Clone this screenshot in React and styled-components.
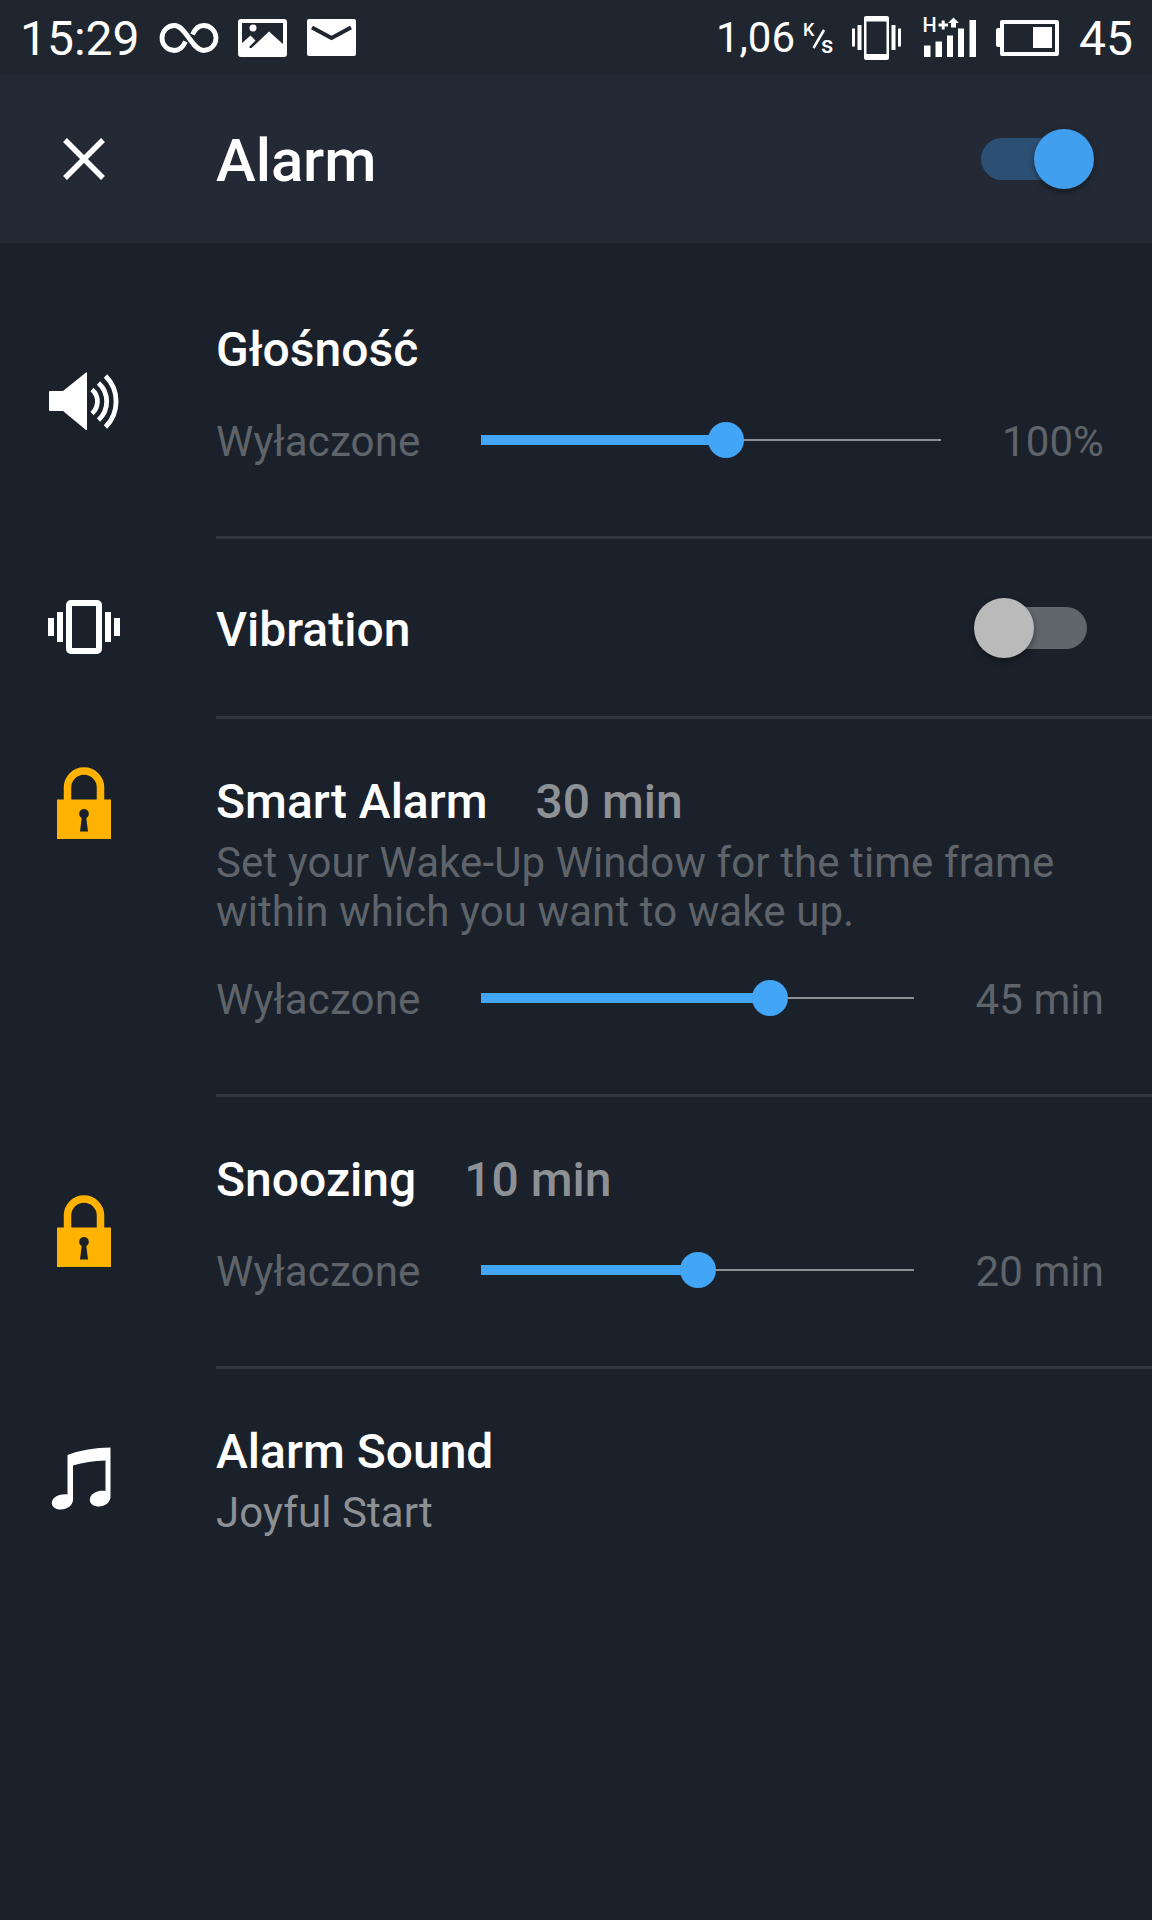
import styled, { createGlobalStyle } from 'styled-components';

const GlobalStyle = createGlobalStyle`
  * {
    box-sizing: border-box;
  }
  body {
    margin: 0;
    background-color: #1b212b;
    font-family: Roboto, 'Noto Sans', sans-serif;
  }
  svg {
    display: block;
    flex: none;
    overflow: visible;
  }
`;

const Screen = styled.div`
  width: 1152px;
  height: 1920px;
  overflow: hidden;
  background-color: #1b212b;
  color: #fff;
`;

const StatusBar = styled.div`
  display: flex;
  justify-content: space-between;
  height: 75px;
  padding: 0 19px 0 20px;
  background-color: #1f2630;
`;

const StatusGroup = styled.div`
  display: flex;
  align-items: center;
  gap: 20px;
`;

const StatusText = styled.span`
  font-size: ${(props) => props.$size}px;
  line-height: 56px;
  padding-top: ${(props) => props.$drop || 0}px;
  white-space: nowrap;
`;

const Speed = styled.div`
  display: flex;
  align-items: center;
  gap: 9px;
  margin-right: -1px;
`;

const Header = styled.header`
  display: flex;
  align-items: center;
  height: 168px;
  padding: 0 58px 0 63px;
  background-color: #232a36;
`;

const Title = styled.h1`
  flex: 1;
  margin: 4px 0 0 111px;
  font-size: 60px;
  font-weight: 500;
  line-height: 70px;
  letter-spacing: -0.1px;
`;

const Section = styled.section`
  display: flex;
  padding-left: 48px;
  padding-top: ${(props) => props.$top || 0}px;
`;

const IconSlot = styled.div`
  display: flex;
  align-items: center;
  justify-content: center;
  flex: none;
  width: 72px;
  height: 72px;
  margin: ${(props) => props.$top}px 96px 0 0;
`;

const Content = styled.div`
  flex: 1;
  padding: 55px 48px 70px 0;
  border-bottom: ${(props) => (props.$last ? 'none' : '3px solid #303640')};
`;

const SwitchContent = styled(Content)`
  display: flex;
  justify-content: space-between;
  height: 180px;
  padding: 63px 58px 0 0;
`;

const Heading = styled.div`
  display: flex;
  gap: 48px;
`;

const Name = styled.h2`
  margin: 0;
  font-size: 48px;
  font-weight: 500;
  line-height: 56px;
  color: ${(props) => (props.$muted ? '#8d9095' : '#fff')};
`;

const Text = styled.p`
  margin: 8px 0 0;
  font-size: 42px;
  line-height: 49px;
  letter-spacing: 0.09px;
  color: ${(props) => (props.$bright ? '#8d9095' : '#5f636a')};
`;

const SliderRow = styled.div`
  display: flex;
  margin-top: 39px;
  font-size: 42px;
  line-height: 49px;
  letter-spacing: 0.12px;
  color: #5f636a;
`;

const Label = styled.span`
  white-space: nowrap;
`;

const Track = styled.div`
  display: flex;
  align-items: center;
  flex: 1;
  height: 46px;
  margin: 0 61px;
`;

const Fill = styled.div`
  height: 10px;
  background-color: #42a5f5;
`;

const Knob = styled.div`
  flex: none;
  width: 36px;
  height: 36px;
  margin: 0 -18px;
  border-radius: 50%;
  background-color: #42a5f5;
  z-index: 1;
`;

const Rest = styled.div`
  flex: 1;
  height: 2px;
  background-color: #8d9095;
`;

const SwitchBody = styled.div`
  display: flex;
  align-items: center;
  justify-content: ${(props) => (props.$on ? 'flex-end' : 'flex-start')};
  width: 106px;
  height: 42px;
  margin: ${(props) => (props.$on ? '0' : '5px')} 7px 0;
  border-radius: 21px;
  background-color: ${(props) => (props.$on ? '#2c5074' : '#61656c')};
`;

const SwitchThumb = styled.div`
  flex: none;
  width: 60px;
  height: 60px;
  margin: -1px -7px 0;
  border-radius: 50%;
  background-color: ${(props) => (props.$on ? '#409fee' : '#bababa')};
  box-shadow: 0 3px 6px rgba(0, 0, 0, 0.4);
`;

function Switch({ on }) {
  return (
    <SwitchBody $on={on}>
      <SwitchThumb $on={on} />
    </SwitchBody>
  );
}

function Slider({ max, value }) {
  return (
    <SliderRow>
      <Label>Wyłaczone</Label>
      <Track>
        <Fill style={{ width: `${value}%` }} />
        <Knob />
        <Rest />
      </Track>
      <Label>{max}</Label>
    </SliderRow>
  );
}

function InfinityIcon() {
  return (
    <svg width="58" height="32" viewBox="0 0 58 32" fill="none" stroke="#fff" strokeWidth="4.800">
      <path d="M25.500 19.500C23 25 19.500 28.500 14.500 28.500a12.500 12.500 0 0 1 0-25C26 3.500 32 28.500 43.500 28.500a12.500 12.500 0 0 0 0-25C38.500 3.500 35 7 32.500 12.500" />
    </svg>
  );
}

function PictureIcon() {
  return (
    <svg width="49" height="38" viewBox="0 0 49 38">
      <rect x="2" y="2" width="45" height="34" rx="1" fill="none" stroke="#fff" strokeWidth="4" />
      <circle cx="15" cy="9" r="3.500" fill="#fff" />
      <path d="M3 25 12.500 16.500l5 5-6 6V29h2L31 12.500 46 26v10H3z" fill="#fff" />
    </svg>
  );
}

function MailIcon() {
  return (
    <svg width="49" height="38" viewBox="0 0 49 38">
      <rect width="49" height="37" rx="2" fill="#fff" />
      <path d="M5 8.500 24.500 19 44 8.500" fill="none" stroke="#1f2630" strokeWidth="4" />
    </svg>
  );
}

function SpeedUnit() {
  return (
    <svg width="29" height="34" viewBox="0 0 29 34" fill="#fff">
      <text x="-1" y="15" fontSize="18" fontWeight="500">K</text>
      <path d="M9.500 27 20 9" stroke="#fff" strokeWidth="2.500" />
      <text x="17" y="32" fontSize="24" fontWeight="500">s</text>
    </svg>
  );
}

function RingerIcon() {
  return (
    <svg width="52" height="44" viewBox="0 0 52 44" fill="#fff">
      <path fillRule="evenodd" d="M14 0h21a2 2 0 0 1 2 2v40a2 2 0 0 1-2 2H14a2 2 0 0 1-2-2V2a2 2 0 0 1 2-2zM14.500 5.500v32.500h20V5.500z" />
      <path d="M0 12.500h3v18H0zM5.500 9H9.500v25H5.500zM39.500 9H43.500v25h-4zM46 12.500h3v18h-3z" />
    </svg>
  );
}

function SignalIcon() {
  return (
    <svg width="52" height="40" viewBox="0 0 52 40" fill="#fff">
      <path d="M0 27.500h6.500V39H0zM11.500 23.500H18V39h-6.500zM23 17.500h6V39h-6zM34 10.500h6V39h-6zM45.500 2H52v37h-6.500z" />
      <path d="M14.500 5.500h9.500V8.500h-9.500zM17.700 2.500h3v9h-3zM29.500-.500l5.500 5.500h-3v4.500h-5V5h-3z" />
      <text x="-1.500" y="14" fontSize="20" fontWeight="500">H</text>
    </svg>
  );
}

function BatteryIcon() {
  return (
    <svg width="63" height="36" viewBox="0 0 63 36" fill="#fff">
      <path fillRule="evenodd" d="M6 0h55a2 2 0 0 1 2 2v32a2 2 0 0 1-2 2H6a2 2 0 0 1-2-2v-7H2a2 2 0 0 1-2-2V10a2 2 0 0 1 2-2h2V2a2 2 0 0 1 2-2zM8 4v28h51V4z" />
      <path d="M37 7h19v21H37z" />
    </svg>
  );
}

function CloseIcon() {
  return (
    <svg width="42" height="42" viewBox="0 0 42 42" stroke="#fff" strokeWidth="5.500">
      <path d="M2 2 40 40M40 2 2 40" />
    </svg>
  );
}

function VolumeIcon() {
  return (
    <svg width="72" height="72" viewBox="0 0 72 72">
      <path d="M2 26h13L38 7.500h1V65h-1L15 46H2q-1 0-1-1V27q0-1 1-1z" fill="#fff" />
      <g fill="none" stroke="#fff" strokeWidth="4.800">
        <path d="M44 24.500a16 16 0 0 1 0 24M50.500 18a25 25 0 0 1 0 37M57.500 11a36 36 0 0 1 0 51" />
      </g>
    </svg>
  );
}

function VibrationIcon() {
  return (
    <svg width="72" height="72" viewBox="0 0 72 72" fill="#fff">
      <rect x="21" y="12" width="30" height="48" rx="2" fill="none" stroke="#fff" strokeWidth="6" />
      <path d="M0 27h6v18H0zM9 21h6v30H9zM57 21h6v30h-6zM66 27h6v18h-6z" />
    </svg>
  );
}

function LockIcon() {
  return (
    <svg width="54" height="72" viewBox="0 0 54 72">
      <path d="M10.500 34V20.500a16.500 16.500 0 0 1 33 0V34" fill="none" stroke="#ffb300" strokeWidth="7.500" />
      <rect y="32.500" width="54" height="39.500" fill="#ffb300" />
      <path d="M27 42a4.800 4.800 0 0 1 2.300 9L31 64.500h-8L24.700 51A4.800 4.800 0 0 1 27 42z" fill="#1b212b" />
    </svg>
  );
}

function NoteIcon() {
  return (
    <svg width="72" height="72" viewBox="0 0 72 72" fill="#fff">
      <path d="M19.500 12Q39 4.500 62.500 4.500V54c0 5-5.500 9.500-11.500 9.500-10 0-12-9-5-13.500 4-2.500 8.500-2.500 11.500-2V17.500Q40 18 25 22.500V57c0 5-6 9.500-12 9.500-10 0-12-8.500-5-13 3.500-2 8-2.500 11.500-2z" />
    </svg>
  );
}

function App() {
  return (
    <Screen>
      <GlobalStyle />
      <StatusBar>
        <StatusGroup>
          <StatusText $size={48} $drop={3}>15:29</StatusText>
          <InfinityIcon />
          <PictureIcon />
          <MailIcon />
        </StatusGroup>
        <StatusGroup>
          <Speed>
            <StatusText $size={42}>1,06</StatusText>
            <SpeedUnit />
          </Speed>
          <RingerIcon />
          <SignalIcon />
          <BatteryIcon />
          <StatusText $size={48} $drop={3}>45</StatusText>
        </StatusGroup>
      </StatusBar>
      <Header>
        <CloseIcon />
        <Title>Alarm</Title>
        <Switch on />
      </Header>
      <Section $top={24}>
        <IconSlot $top={98}>
          <VolumeIcon />
        </IconSlot>
        <Content>
          <Name>Głośność</Name>
          <Slider max="100%" value={53.2} />
        </Content>
      </Section>
      <Section>
        <IconSlot $top={52}>
          <VibrationIcon />
        </IconSlot>
        <SwitchContent>
          <Name>Vibration</Name>
          <Switch />
        </SwitchContent>
      </Section>
      <Section>
        <IconSlot $top={48}>
          <LockIcon />
        </IconSlot>
        <Content>
          <Heading>
            <Name>Smart Alarm</Name>
            <Name $muted>30 min</Name>
          </Heading>
          <Text>
            Set your Wake-Up Window for the time frame within which you want to wake up.
          </Text>
          <Slider max="45 min" value={66.6} />
        </Content>
      </Section>
      <Section>
        <IconSlot $top={98}>
          <LockIcon />
        </IconSlot>
        <Content>
          <Heading>
            <Name>Snoozing</Name>
            <Name $muted>10 min</Name>
          </Heading>
          <Slider max="20 min" value={50} />
        </Content>
      </Section>
      <Section>
        <IconSlot $top={74}>
          <NoteIcon />
        </IconSlot>
        <Content $last>
          <Name>Alarm Sound</Name>
          <Text $bright>Joyful Start</Text>
        </Content>
      </Section>
    </Screen>
  );
}

export default App;
